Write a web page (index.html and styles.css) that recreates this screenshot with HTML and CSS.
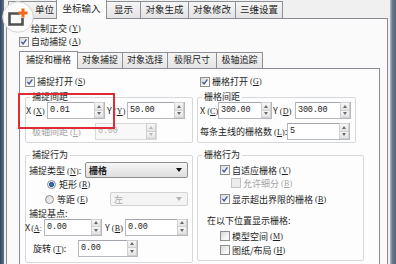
FILE: index.html
```html
<!DOCTYPE html>
<html lang="zh-CN">
<head>
  <meta charset="UTF-8">
  <title>草图设置</title>
  <link rel="stylesheet" href="styles.css">
</head>
<body>
  <div class="window">
    <div class="frame-left"></div>
    <div class="dialog">
      <!-- top tabs -->
      <div class="tabs outer-tabs">
        <div class="tab t-unit">单位</div>
        <div class="tab active t-coord">坐标输入</div>
        <div class="tab t-show">显示</div>
        <div class="tab t-gen">对象生成</div>
        <div class="tab t-mod">对象修改</div>
        <div class="tab t-3d">三维设置</div>
      </div>
      <div class="page outer-page">
        <div class="line"><span class="cb-gap"></span>绘制正交<span class="key">(<u>Y</u>)</span></div>
        <div class="line"><span class="cb on"><svg viewBox="0 0 10 10"><path d="M1.8 4.8 L3.9 7.4 L8 1.8" /></svg></span>自动捕捉<span class="key">(<u>A</u>)</span></div>

        <!-- inner tabs -->
        <div class="tabs inner-tabs">
          <div class="tab active i-grid">捕捉和栅格</div>
          <div class="tab i-osnap">对象捕捉</div>
          <div class="tab i-osel">对象选择</div>
          <div class="tab i-lim">极限尺寸</div>
          <div class="tab i-polar">极轴追踪</div>
        </div>
        <div class="page inner-page">
          <div class="col">
            <div class="line"><span class="cb on"><svg viewBox="0 0 10 10"><path d="M1.8 4.8 L3.9 7.4 L8 1.8" /></svg></span>捕捉打开<span class="key">(<u>S</u>)</span></div>

            <fieldset class="group gap-box snap-gap">
              <legend>捕捉间距</legend>
              <div class="frow">
                <span class="lbl l-sx">X<span class="key">(<u>X</u>)</span></span>
                <div class="field w58"><span class="val">0.01</span><span class="spin"><i class="up"></i><i class="dn"></i></span></div>
                <span class="lbl l-sy">Y<span class="key">(<u>Y</u>)</span></span>
                <div class="field w58"><span class="val">50.00</span><span class="spin"><i class="up"></i><i class="dn"></i></span></div>
              </div>
              <div class="frow second off">
                <span class="lbl l-polar">极轴间距<span class="key">(<u>L</u>)</span></span>
                <div class="field w62 dis"><span class="val">0.00</span><span class="spin"><i class="up"></i><i class="dn"></i></span></div>
              </div>
            </fieldset>

            <fieldset class="group act-box snap-act">
              <legend>捕捉行为</legend>
              <div class="frow type-row">
                <span class="lbl l-type">捕捉类型<span class="key">(<u>N</u>)</span>:</span>
                <div class="combo w103"><span class="cv">栅格</span><span class="arrow"></span></div>
              </div>
              <div class="rrow">
                <span class="radio r-rect on"></span>矩形<span class="key">(<u>R</u>)</span>
              </div>
              <div class="rrow iso-row">
                <span class="radio r-iso"></span>等距<span class="key">(<u>E</u>)</span>
                <div class="combo w78 dis"><span class="cv">左</span><span class="arrow"></span></div>
              </div>
              <div class="rrow base-row"><span class="lbl l-base">捕捉基点:</span></div>
              <div class="frow base-xy">
                <span class="lbl l-ax">X<span class="key tight">(<u>A</u>:</span></span>
                <div class="field w58"><span class="val">0.00</span><span class="spin"><i class="up"></i><i class="dn"></i></span></div>
                <span class="lbl l-by">Y<span class="key">(<u>B</u>)</span></span>
                <div class="field w63"><span class="val">0.00</span><span class="spin"><i class="up"></i><i class="dn"></i></span></div>
              </div>
              <div class="frow rot-row">
                <span class="lbl l-rot">旋转<span class="key">(<u>T</u>)</span>:</span>
                <div class="field w60"><span class="val">0.00</span><span class="spin"><i class="up"></i><i class="dn"></i></span></div>
              </div>
            </fieldset>
          </div>

          <div class="col">
            <div class="line"><span class="cb on grid-on"><svg viewBox="0 0 10 10"><path d="M1.8 4.8 L3.9 7.4 L8 1.8" /></svg></span>栅格打开<span class="key">(<u>G</u>)</span></div>

            <fieldset class="group gap-box grid-gap">
              <legend>栅格间距</legend>
              <div class="frow">
                <span class="lbl l-cx">X<span class="key">(<u>C</u>)</span></span>
                <div class="field w54"><span class="val">300.00</span><span class="spin"><i class="up"></i><i class="dn"></i></span></div>
                <span class="lbl l-dy">Y<span class="key">(<u>D</u>)</span></span>
                <div class="field w56"><span class="val">300.00</span><span class="spin"><i class="up"></i><i class="dn"></i></span></div>
              </div>
              <div class="frow second">
                <span class="lbl l-major">每条主线的栅格数<span class="key">(<u>L</u>)</span>:</span>
                <div class="field w63"><span class="val">5</span><span class="spin"><i class="up"></i><i class="dn"></i></span></div>
              </div>
            </fieldset>

            <fieldset class="group act-box grid-act">
              <legend>栅格行为</legend>
              <div class="crow c-adapt"><span class="cb on"><svg viewBox="0 0 10 10"><path d="M1.8 4.8 L3.9 7.4 L8 1.8" /></svg></span>自适应栅格<span class="key">(<u>V</u>)</span></div>
              <div class="crow c-sub off"><span class="cb dis"></span>允许细分<span class="key">(<u>B</u>)</span></div>
              <div class="crow c-beyond"><span class="cb on"><svg viewBox="0 0 10 10"><path d="M1.8 4.8 L3.9 7.4 L8 1.8" /></svg></span>显示超出界限的栅格<span class="key">(<u>B</u>)</span></div>
              <div class="crow c-where">在以下位置显示栅格:</div>
              <div class="crow c-model"><span class="cb"></span>模型空间<span class="key">(<u>M</u>)</span></div>
              <div class="crow c-paper"><span class="cb"></span>图纸/布局<span class="key">(<u>H</u>)</span></div>
            </fieldset>
          </div>

          <!-- red highlight drawn over the snap spacing -->
          <div class="callout"></div>
        </div>
      </div>
    </div>
    <div class="frame-right"></div>
  </div>

  <!-- magnifier badge over the corner -->
  <div class="lens">
    <svg viewBox="0 0 32 32" width="32" height="32">
      <circle cx="16" cy="16" r="15.3" fill="#fbfbfb" fill-opacity="0.94" stroke="#d4d4d4" stroke-width="1"/>
      <path d="M18 12.5 H7.5 V23.5 H20.5 V17" fill="none" stroke="#505050" stroke-width="2.6"/>
      <path d="M21 7.5 V16.5 M16.5 12 H25.5" stroke="#f26a1b" stroke-width="3"/>
    </svg>
  </div>
</body>
</html>
```

FILE: styles.css
```css
body {
  margin: 0;
  width: 396px;
  height: 264px;
  overflow: hidden;
  background: #f0f0f0;
  font-family: "Noto Sans CJK SC", "Noto Sans", sans-serif;
  font-size: 9px;
  color: #1e1e1e;
  position: relative;
}
.window {
  display: flex;
  height: 264px;
  overflow: hidden;
}
.frame-left {
  width: 4px;
  background: linear-gradient(to right, #34445c, #61738f);
}
.frame-right {
  width: 6px;
  background: linear-gradient(to right, #b7c0cc, #6b788d 40%, #56647a);
}
.dialog {
  flex: 1;
  padding: 0 2px;
  background: #f0f0f0;
}

/* tabs */
.tabs {
  display: flex;
  align-items: flex-end;
}
.tab {
  box-sizing: border-box;
  border: 1px solid #8d9096;
  border-bottom: none;
  margin-right: -1px;
  background: linear-gradient(#f5f5f5, #e4e4e4);
  text-align: center;
  white-space: nowrap;
  line-height: 14px;
}
.tab.active {
  background: #fcfcfc;
  position: relative;
  z-index: 1;
  margin-bottom: -1px;
}
.outer-tabs {
  height: 18px;
  padding-left: 2px;
}
.outer-tabs .tab {
  height: 17px;
  font-size: 9.5px;
}
.outer-tabs .tab.active {
  height: 20px;
  line-height: 17px;
}
.t-unit { width: 49px; text-align: left; padding-left: 26px; }
.t-coord { width: 51px; }
.t-show { width: 35px; }
.t-gen { width: 49px; }
.t-mod { width: 48px; }
.t-3d { width: 48px; }

.page {
  box-sizing: border-box;
  border: 1px solid #898c95;
  border-bottom: none;
}
.outer-page {
  height: 246px;
  background: #fafafa;
  padding: 3px 0 0 12px;
}
.inner-tabs {
  height: 17px;
  margin-top: 3px;
}
.inner-tabs .tab {
  height: 16px;
  line-height: 14px;
}
.inner-tabs .tab.active {
  height: 18px;
  line-height: 16px;
}
.i-grid { width: 59px; }
.i-osnap { width: 46px; }
.i-osel { width: 46px; }
.i-lim { width: 50px; }
.i-polar { width: 47px; }

.inner-page {
  width: 361px;
  height: 196px;
  background: #fdfdfd;
  padding: 6px 0 0 5px;
  display: grid;
  grid-template-columns: 168px 165px;
  column-gap: 4px;
  align-items: start;
  position: relative;
}

/* rows */
.line {
  display: flex;
  align-items: center;
  height: 13px;
  white-space: nowrap;
}
.key {
  font-family: "Liberation Serif", serif;
  font-size: 8px;
  margin-left: 2px;
  letter-spacing: 0.2px;
}
.key.tight {
  margin-left: 1px;
  letter-spacing: 0;
}
.cb-gap {
  width: 10px;
  margin-right: 2px;
}
.cb {
  flex: none;
  box-sizing: border-box;
  width: 10px;
  height: 10px;
  border: 1px solid #8e8f8f;
  background: linear-gradient(135deg, #d8d8d8, #f7f7f7 70%);
  margin-right: 2px;
  display: flex;
}
.cb svg {
  width: 8px;
  height: 8px;
}
.cb svg path {
  fill: none;
  stroke: #40579b;
  stroke-width: 1.7;
}
.cb.dis {
  border-color: #c4c4c4;
  background: #ececec;
}
.grid-on {
  margin-left: 3px;
}
.radio {
  flex: none;
  box-sizing: border-box;
  width: 9px;
  height: 9px;
  border: 1px solid #8e8f8f;
  border-radius: 50%;
  background: linear-gradient(135deg, #d8d8d8, #f7f7f7);
  margin-right: 3px;
}
.radio.on {
  background: radial-gradient(circle, #3c78c4 0, #2a5b9c 2.2px, #e9e9e9 2.8px);
}

/* group boxes */
.group {
  margin: 0;
  padding: 0;
  border: 1px solid #d5d8dc;
  border-radius: 2px;
  min-width: 0;
}
.group legend {
  padding: 0 2px;
  margin-left: 4px;
  line-height: 10px;
}
.gap-box {
  margin-top: 4px;
  padding-bottom: 2px;
}
.act-box {
  margin-top: 7px;
}
.snap-act {
  padding-bottom: 6px;
}
.grid-gap {
  width: 157px;
}
.grid-act {
  width: 165px;
  padding-bottom: 4px;
}
.frow {
  display: flex;
  align-items: center;
  height: 17px;
  white-space: nowrap;
}
.frow.second {
  margin-top: 4px;
}
.off {
  color: #a3a3a3;
}
.lbl {
  flex: none;
}
.l-sx { width: 21px; }
.l-sy { width: 20px; margin-left: 2px; }
.l-polar { width: 63px; margin-left: 6px; }
.l-cx { width: 18px; margin-left: 2px; }
.l-dy { width: 22px; margin-left: 1px; }
.l-major { width: 87px; margin-left: 2px; }
.l-type { width: 56px; margin-left: 3px; }
.l-base { margin-left: 3px; }
.l-ax { width: 19px; margin-left: -1px; }
.l-by { width: 20px; padding-left: 3px; }
.l-rot { width: 45px; margin-left: 7px; }

/* spinner fields */
.field {
  flex: none;
  display: flex;
  box-sizing: border-box;
  height: 17px;
  border: 1px solid #b5b8bf;
  border-top-color: #a3a6ad;
  background: #fff;
}
.field .val {
  flex: 1;
  padding-left: 2px;
  font-family: "Liberation Mono", monospace;
  font-size: 8.5px;
  letter-spacing: -0.2px;
  line-height: 15px;
  color: #1a1a1a;
}
.field .spin {
  width: 9px;
  display: flex;
  flex-direction: column;
  border-left: 1px solid #d2d2d2;
}
.spin i {
  flex: 1;
  display: flex;
  align-items: center;
  justify-content: center;
  background: linear-gradient(#f7f7f7, #e3e3e3);
  border: 1px solid #d0d0d0;
  margin: -1px 0 0 -1px;
}
.spin i::after {
  content: "";
  border-left: 2px solid transparent;
  border-right: 2px solid transparent;
}
.spin .up::after { border-bottom: 3px solid #6a6a6a; }
.spin .dn::after { border-top: 3px solid #6a6a6a; }
.field.dis {
  border-color: #dadada;
  background: #f8f8f8;
}
.field.dis .val { color: #b0b0b0; }
.field.dis .spin i::after { opacity: 0.4; }
.w54 { width: 54px; }
.w56 { width: 56px; }
.w58 { width: 58px; }
.w60 { width: 60px; }
.w62 { width: 62px; }
.w63 { width: 63px; }

/* combo boxes */
.combo {
  flex: none;
  display: flex;
  align-items: center;
  box-sizing: border-box;
  height: 16px;
  border: 1px solid #8e8f8f;
  border-radius: 2px;
  background: linear-gradient(#f6f6f6, #dedede);
  padding-left: 3px;
}
.combo .cv {
  flex: 1;
  font-weight: bold;
}
.combo .arrow {
  width: 0;
  height: 0;
  border-left: 3px solid transparent;
  border-right: 3px solid transparent;
  border-top: 4px solid #111;
  margin-right: 5px;
}
.combo.dis {
  height: 14px;
  border-color: #d2d2d2;
  background: #f4f4f4;
  color: #a8a8a8;
  margin-left: auto;
  margin-right: 4px;
}
.combo.dis .cv { font-weight: normal; }
.combo.dis .arrow { border-top-color: #b4b4b4; }
.w103 { width: 103px; }
.w78 { width: 78px; }

.type-row {
  height: 16px;
  margin-top: 2px;
}
.rrow {
  display: flex;
  align-items: center;
  height: 12px;
  white-space: nowrap;
}
.r-rect { margin-left: 21px; }
.r-iso { margin-left: 19px; }
.iso-row {
  height: 14px;
  margin-top: 2px;
}
.base-row { margin-top: 1px; }
.base-xy { height: 16px; }
.rot-row {
  height: 16px;
  margin-top: 5px;
}

.crow {
  display: flex;
  align-items: center;
  height: 12px;
  white-space: nowrap;
}
.c-adapt { margin-top: 4px; padding-left: 22px; }
.c-sub { margin-top: 1px; padding-left: 33px; }
.c-beyond { margin-top: 4px; padding-left: 22px; }
.c-where { margin-top: 9px; padding-left: 9px; }
.c-model { margin-top: 4px; padding-left: 22px; }
.c-paper { margin-top: 2px; padding-left: 22px; }

.callout {
  position: absolute;
  left: -2px;
  top: 24px;
  width: 97px;
  height: 36px;
  box-sizing: border-box;
  border: 2px solid #df2c34;
}
.lens {
  position: absolute;
  left: 2px;
  top: 1px;
  width: 32px;
  height: 32px;
  z-index: 5;
}
```
